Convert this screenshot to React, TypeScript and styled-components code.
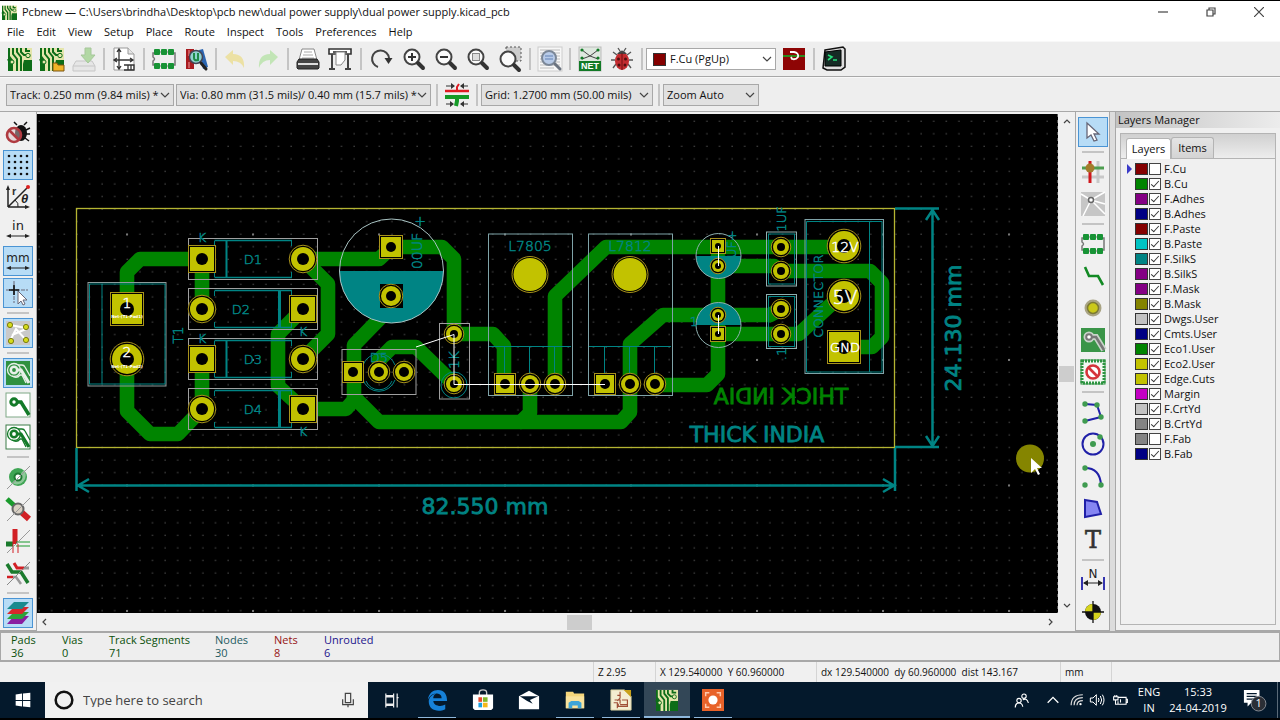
import React from "react";
import styled, { createGlobalStyle, css } from "styled-components";

const GlobalStyle = createGlobalStyle`
  *, *::before, *::after { box-sizing: border-box; }
  body { margin: 0; background: #000; }
  button, select, input { font: inherit; color: inherit; margin: 0; }
  a { color: inherit; text-decoration: none; }
`;

/* ---------- window frame ---------- */

const Screen = styled.div`
  display: flex;
  flex-direction: column;
  min-height: 100vh;
  padding: 1px 0 2px;
  background: #000;
  color: #111;
  font: 11px/14px "Open Sans", "Noto Sans", sans-serif;
`;
const TitleBar = styled.header`
  display: flex;
  align-items: center;
  height: 22px;
  padding-left: 2px;
  gap: 5px;
  background: #fff;
`;
const Title = styled.h1`
  flex: 1;
  margin: 0;
  font-size: 11px;
  font-weight: 400;
  white-space: nowrap;
`;
const WindowButton = styled.button`
  display: grid;
  place-items: center;
  width: 43px;
  height: 22px;
  padding: 0;
  border: 0;
  background: none;
`;
const MenuBar = styled.nav`
  display: flex;
  align-items: center;
  gap: 12px;
  height: 18px;
  padding-left: 7px;
  background: #fff;
`;
const MenuItem = styled.button`
  padding: 0;
  border: 0;
  background: none;
`;
const ToolRow = styled.div<{ $tall?: boolean }>`
  display: flex;
  align-items: center;
  height: ${(p) => (p.$tall ? 36 : 35)}px;
  padding-left: ${(p) => (p.$tall ? 4 : 6)}px;
  background: #eee;
  border-top: 1px solid #f8f8f8;
  border-bottom: 1px solid #a8a8a8;
`;
const ToolButton = styled.button<{ $on?: boolean; $faded?: boolean }>`
  display: grid;
  place-items: center;
  flex: none;
  width: 30px;
  height: 30px;
  margin: 1px;
  padding: 0;
  border: 1px solid ${(p) => (p.$on ? "#4a94d4" : "transparent")};
  background: ${(p) => (p.$on ? "#b7dcf6" : "transparent")};
  opacity: ${(p) => (p.$faded ? 0.45 : 1)};
`;
const Divider = styled.span<{ $across?: boolean; $size?: number }>`
  flex: none;
  ${(p) =>
    p.$across
      ? css`
          width: 22px;
          height: 2px;
          margin: 3px 0;
        `
      : css`
          width: 2px;
          height: 22px;
          margin: 0 ${((p.$size ?? 8) - 2) / 2}px;
        `}
  background: #c4c4c4;
`;
const SelectBox = styled.span<{ $width: number; $white?: boolean }>`
  display: grid;
  align-items: center;
  flex: none;
  width: ${(p) => p.$width}px;
  height: 22px;
  margin-right: 2px;
  border: 1px solid #a8a8a8;
  background: ${(p) => (p.$white ? "#fff" : "#e1e1e1")};
  & > * { grid-area: 1 / 1; }
  & > svg { justify-self: end; margin-right: 3px; pointer-events: none; }
`;
const NativeSelect = styled.select<{ $swatch?: boolean }>`
  width: 100%;
  height: 20px;
  padding: 0 0 0 ${(p) => (p.$swatch ? 23 : 3)}px;
  border: 0;
  background: transparent;
  appearance: none;
`;
const SelectSwatch = styled.i`
  width: 13px;
  height: 13px;
  margin-left: 6px;
  border: 1px solid #333;
  background: #840000;
  pointer-events: none;
`;

/* ---------- work area ---------- */

const Work = styled.main`
  display: flex;
  flex: 1;
  background: #dcdcdc;
`;
const SideBar = styled.div<{ $right?: boolean }>`
  display: flex;
  flex-direction: column;
  align-items: center;
  flex: none;
  width: ${(p) => (p.$right ? 35 : 37)}px;
  padding: ${(p) => (p.$right ? "4px 0 0" : "5px 1px 0 0")};
  background: #f0f0f0;
  border: 0 solid #a8a8a8;
  border-width: ${(p) => (p.$right ? "0 1px 1px" : "0 1px 1px 0")};
`;
const CanvasArea = styled.section`
  display: flex;
  flex: 1;
  min-width: 0;
  padding-top: 2px;
  background: #f0f0f0;
`;
const CanvasColumn = styled.div`
  display: flex;
  flex-direction: column;
  flex: 1;
  min-width: 0;
`;
const BoardSvg = styled.svg`
  display: block;
  flex: 1 1 0;
  width: 100%;
  min-height: 400px;
  background: #000;
  font-family: "DejaVu Sans", sans-serif;
`;
const Scroll = styled.div<{ $vertical?: boolean }>`
  display: flex;
  align-items: center;
  flex: none;
  flex-direction: ${(p) => (p.$vertical ? "column" : "row")};
  ${(p) => (p.$vertical ? "width: 17px; margin-bottom: 18px;" : "height: 18px;")}
  background: #f0f0f0;
`;
const ScrollArrow = styled.button`
  display: grid;
  place-items: center;
  width: 16px;
  height: 16px;
  padding: 0;
  border: 0;
  background: none;
`;
const ScrollGap = styled.span<{ $grow: number }>`
  flex: ${(p) => p.$grow} 1 0;
`;
const ScrollThumb = styled.span<{ $vertical?: boolean }>`
  width: ${(p) => (p.$vertical ? 15 : 25)}px;
  height: ${(p) => (p.$vertical ? 16 : 15)}px;
  background: #cdcdcd;
`;

/* ---------- layers manager ---------- */

const Manager = styled.aside`
  display: flex;
  flex-direction: column;
  flex: none;
  width: 165px;
  margin-left: 5px;
  padding: 0 4px 5px 0;
  background: #f0f0f0;
  border-left: 1px solid #a8a8a8;
  border-bottom: 1px solid #a8a8a8;
`;
const ManagerTitle = styled.h2`
  margin: 0 -4px 0 0;
  padding-left: 2px;
  background: linear-gradient(90deg, #c3c3c3, #ececec);
  font-size: 11px;
  font-weight: 400;
  line-height: 16px;
`;
const Notebook = styled.div`
  flex: 1;
  margin: 5px 0 0 4px;
  border: 1px solid #b4b4b4;
`;
const TabRow = styled.div`
  display: flex;
  align-items: flex-end;
  height: 25px;
  padding-left: 5px;
  background: linear-gradient(#d0d0d0, #ededed);
  border-bottom: 1px solid #b4b4b4;
`;
const Tab = styled.button<{ $on?: boolean }>`
  height: 21px;
  width: ${(p) => (p.$on ? 45 : 43)}px;
  margin-bottom: ${(p) => (p.$on ? -1 : 0)}px;
  padding: 0;
  border: 1px solid #b4b4b4;
  border-bottom: 0;
  border-radius: 3px 3px 0 0;
  background: ${(p) => (p.$on ? "#fff" : "linear-gradient(#e4e4e4, #d4d4d4)")};
`;
const LayerList = styled.ul`
  margin: 0;
  padding: 2px 0 0 6px;
  list-style: none;
`;
const LayerRow = styled.li`
  display: flex;
  align-items: center;
  height: 15px;
`;
const LayerMark = styled.span<{ $on?: boolean }>`
  width: 8px;
  height: 10px;
  border: 0 solid transparent;
  border-width: 5px 0 5px 5px;
  border-left-color: ${(p) => (p.$on ? "#3a3ac8" : "transparent")};
`;
const LayerSwatch = styled.span<{ $color: string }>`
  width: 13px;
  height: 12px;
  margin-right: 1px;
  border: 1px solid #333;
  background: ${(p) => p.$color};
`;
const LayerLabel = styled.label`
  display: flex;
  align-items: center;
  gap: 3px;
`;
const LayerCheck = styled.input`
  position: relative;
  width: 12px;
  height: 12px;
  border: 1px solid #444;
  background: #fff;
  appearance: none;
  &:checked::after {
    content: "";
    position: absolute;
    left: 3px;
    top: 0;
    width: 4px;
    height: 8px;
    border: solid #333;
    border-width: 0 1px 1px 0;
    transform: rotate(42deg);
  }
`;

/* ---------- bottom bars ---------- */

const MessagePanel = styled.section`
  display: flex;
  height: 31px;
  padding: 0 10px;
  background: #eee;
  border: 1px solid #a8a8a8;
  border-width: 2px 1px;
  line-height: 14px;
  dl { margin: 0; }
  dt, dd { margin: 0; white-space: nowrap; }
  dd { margin-top: -1px; }
`;
const Message = styled.dl<{ $color: string; $width: number }>`
  width: ${(p) => p.$width}px;
  color: ${(p) => p.$color};
`;
const StatusBar = styled.footer`
  display: grid;
  grid-template-columns: 594fr 62fr 161fr 244fr 51fr 168fr;
  height: 20px;
  background: #f0f0f0;
  font-size: 10px;
`;
const StatusCell = styled.span`
  padding-left: 4px;
  border-right: 1px solid #d4d4d4;
  line-height: 20px;
  white-space: pre;
`;
const TaskBar = styled.div`
  display: flex;
  height: 36px;
  background: #04192c;
  color: #fff;
`;
const StartButton = styled.button`
  display: grid;
  place-items: center;
  width: 45px;
  padding: 0;
  border: 0;
  background: none;
`;
const SearchBox = styled.label`
  display: flex;
  align-items: center;
  width: 323px;
  padding: 0 12px 0 9px;
  gap: 9px;
  background: #f1f1f1;
  color: #444;
`;
const SearchInput = styled.input`
  flex: 1;
  min-width: 0;
  padding: 0;
  border: 0;
  outline: 0;
  background: none;
  font-size: 13px;
  &::placeholder { color: #444; opacity: 1; }
`;
const TaskButton = styled.button<{ $state?: "open" | "active" }>`
  display: grid;
  place-items: center;
  width: 46px;
  padding: 0;
  border: 0;
  background: ${(p) => (p.$state === "active" ? "#334757" : "none")};
  box-shadow: ${(p) => (p.$state === "active" ? "inset 0 -2px #8fb8dc" : "none")};
  ${(p) =>
    p.$state === "open" &&
    css`
      background: linear-gradient(#8fb8dc, #8fb8dc) center bottom / 38px 1px no-repeat;
    `}
`;
const Tray = styled.div`
  display: flex;
  align-items: center;
  margin-left: auto;
  border-right: 1px solid #5a6a78;
  margin-right: 2px;
`;
const TrayButton = styled.button<{ $width: number }>`
  display: grid;
  place-items: center;
  width: ${(p) => p.$width}px;
  padding: 0;
  border: 0;
  background: none;
  line-height: 16px;
  white-space: pre-line;
`;

/* ---------- icons ---------- */

const IconSvg = styled.svg`
  overflow: visible;
`;
const Board = () => (
  <>
    <rect x="0" y="1" width="24" height="23" fill="#e4e5ac" />
    <path d="M0 1h2v8l3 4v11H0zM16 13h8v11h-9v-7z" fill="#0d6d18" />
    <path d="M5 1v6l4 5v12M9 1v4l4 5v14M13 1v4l3 3h5M0 12l2 4M18 1v3l4 0M1 24v-8" fill="none" stroke="#0d6d18" strokeWidth="2" />
    <circle cx="4" cy="15" r="2" fill="#e4e5ac" stroke="#0d6d18" />
    <circle cx="20" cy="8.5" r="2.2" fill="#e4e5ac" stroke="#0d6d18" />
  </>
);
const Glass = ({ children }: { children?: React.ReactNode }) => (
  <>
    <circle cx="10" cy="10" r="7.5" fill="#fafafa" stroke="#444" strokeWidth="2" />
    <path d="M16 16l5 5" stroke="#333" strokeWidth="4" strokeLinecap="round" />
    {children}
  </>
);
const Foot = () => (
  <>
    <path d="M4 6H1v4q3 2 0 4v4h3M20 6h3v12h-3" fill="none" stroke="#777" strokeWidth="1.5" />
    <path d="M3 5h18M3 19h18" stroke="#777" />
    {[2, 9, 16].map((x) => (
      <g key={x} fill="#179335">
        <rect x={x} y="2" width="6" height="6" rx="1" />
        <rect x={x} y="16" width="6" height="6" rx="1" />
      </g>
    ))}
  </>
);
const ZoneTrack = ({ line, bg, outline }: { line: string; bg: string; outline?: boolean }) => (
  <>
    <rect x="0" y="0" width="24" height="24" fill={bg} stroke={outline ? "#3d7c48" : "none"} />
    <circle cx="8" cy="9" r="6.500" fill="none" stroke={line} strokeWidth="1.300" />
    <path d="M12 4h4q2 0 3 2l5 9M6 15q5 3 8-1l2 0 4 8" fill="none" stroke={line} strokeWidth="1.300" />
    <path d="M10 9h5l8 13" fill="none" stroke={line} strokeWidth="3.200" />
    <circle cx="8" cy="9" r="3.200" fill={bg} stroke={line} strokeWidth="2.600" />
  </>
);
const icons: Record<string, React.ReactNode> = {
  board: <Board />,
  openBoard: (
    <>
      <Board />
      <path d="M13 16h4l1 2h6v6H13z" fill="#f0b428" stroke="#7a5510" />
    </>
  ),
  save: (
    <>
      <path d="M4 14h16l3 5v5H1v-5z" fill="#ddd" stroke="#999" />
      <path d="M1 19h22" stroke="#999" />
      <path d="M13 1h6v7h4l-7 8-7-8h4z" fill="#6abf4b" stroke="#509838" />
    </>
  ),
  sheet: (
    <>
      <path d="M2 1h14l6 6v16H2z" fill="#fff" stroke="#999" />
      <path d="M16 1v6h6" fill="#e5e5e5" stroke="#999" />
      <path d="M7 3v18M3 13h17M5 5l2-3 2 3M5 19l2 3 2-3M18 11l3 2-3 2M5 11l-3 2 3 2M12 18h10v5H12M16 18v5M19 18v5" fill="none" stroke="#333" strokeWidth="1.3" />
    </>
  ),
  footprint: <Foot />,
  library: (
    <>
      <path d="M2 2h8v20H2z" fill="#a81c20" />
      <path d="M5 3v6M5 15v6" stroke="#ef999b" strokeWidth="1" />
      <path d="M15 3l4-1 5 18-5 2z" fill="#2b65b0" />
      <circle cx="12" cy="10" r="6.5" fill="#8fd2cf" stroke="#445" strokeWidth="1.5" />
      <path d="M10 6v5q0 3 4 2V6" fill="none" stroke="#1d8a48" strokeWidth="2" />
      <path d="M17 16l5 6" stroke="#222" strokeWidth="3" strokeLinecap="round" />
    </>
  ),
  undo: <path d="M9 3v4q12 0 11 14-3-7-11-7v4L1 10z" fill="#ead24c" />,
  redo: <path d="M14 3v4Q2 7 3 21q3-8 11-8v5l8-8z" fill="#8fdc73" />,
  print: (
    <>
      <path d="M6 2h12l3 11H3z" fill="#fff" stroke="#888" />
      <path d="M8 5h8M7 8h10M6 11h12" stroke="#aaa" />
      <path d="M3 12h18l2 3v6l-1 1H2l-1-1v-6z" fill="#444" stroke="#222" />
      <path d="M2 17h20" stroke="#ddd" strokeWidth="2" />
    </>
  ),
  plot: (
    <>
      <path d="M1 2h22v5H1z" fill="#fff" stroke="#333" strokeWidth="1.6" />
      <path d="M5 5h14" stroke="#333" strokeWidth="1.6" />
      <path d="M4 7v14M20 7v14M1 22h6M17 22h6" stroke="#444" strokeWidth="2" />
      <path d="M8 5h9v8l-4 5H8z" fill="#fff" stroke="#888" />
    </>
  ),
  refresh: (
    <>
      <path d="M8 20a8.500 8.500 0 1 1 11-9" fill="none" stroke="#444" strokeWidth="2" />
      <path d="M14.500 11h8l-4 6z" fill="#333" />
    </>
  ),
  zoomIn: <Glass><path d="M6 10h8M10 6v8" stroke="#333" strokeWidth="2" /></Glass>,
  zoomOut: <Glass><path d="M6 10h8" stroke="#333" strokeWidth="2" /></Glass>,
  zoomFit: <Glass><rect x="6.500" y="6.500" width="7" height="7" fill="#ddd" stroke="#888" /></Glass>,
  zoomArea: (
    <>
      <rect x="8" y="0" width="15" height="14" fill="#ccc" stroke="#555" strokeDasharray="2 2" />
      <g transform="translate(0 2)"><Glass /></g>
    </>
  ),
  find: (
    <>
      <rect x="0" y="0" width="24" height="24" fill="#f7f7f7" stroke="#ccc" />
      <path d="M2 3h20M2 6h20M2 9h20M2 12h20M2 15h20M2 18h20M2 21h14" stroke="#bbb" />
      <circle cx="11" cy="11" r="7" fill="#b8cbe8" stroke="#7b8797" strokeWidth="2" />
      <path d="M7 9h8M7 12h8" stroke="#6282b5" />
      <path d="M17 17l5 5" stroke="#6c7480" strokeWidth="3" strokeLinecap="round" />
    </>
  ),
  net: (
    <>
      <rect x="1" y="0" width="22" height="24" fill="#dfe8df" stroke="#bbb" />
      <path d="M4 3l8 6 8-6M4 12l8-3 8 3" fill="none" stroke="#444" />
      <g fill="#127a26"><circle cx="4" cy="3" r="1.600" /><circle cx="20" cy="3" r="1.600" /><circle cx="4" cy="11" r="1.600" /><circle cx="20" cy="11" r="1.600" /></g>
      <rect x="1" y="14" width="22" height="10" fill="#127a26" />
      <text x="12" y="22" textAnchor="middle" fontSize="9" fontWeight="700" fill="#fff" fontFamily="Liberation Sans">NET</text>
    </>
  ),
  bug: (
    <>
      <path d="M7 8L3 5M17 8l4-3M5 13H1M19 13h4M6 17l-3 4M18 17l3 4M10 4L8 1M14 4l2-3" stroke="#555" strokeWidth="1.300" />
      <ellipse cx="12" cy="14" rx="7" ry="9" fill="#c32b2f" />
      <path d="M7 7q5-7 10 0z" fill="#444" />
      <path d="M12 6v17" stroke="#701010" />
      <g fill="#501010"><circle cx="8.500" cy="12" r="1.500" /><circle cx="15.500" cy="12" r="1.500" /><circle cx="9" cy="18" r="1.500" /><circle cx="15" cy="18" r="1.500" /></g>
    </>
  ),
  layerPair: (
    <>
      <rect x="1" y="1" width="22" height="22" fill="#8e0505" />
      <path d="M1 9h22" stroke="#2a8a1c" strokeWidth="2" />
      <path d="M8 5h4q5 1 4 5-2 3-6 2l-1-2" fill="none" stroke="#fff" strokeWidth="1.800" />
    </>
  ),
  console: (
    <>
      <path d="M3 3L21 0l2 2v18l-4 3H5l-4-2z" fill="#ddd" stroke="#111" strokeWidth="1.500" />
      <path d="M3 5l16-2v16H3z" fill="#152b25" stroke="#000" />
      <path d="M6 8l4 2-4 3M11 13h4" fill="none" stroke="#25e07a" strokeWidth="1.600" />
    </>
  ),
  trackWidth: (
    <>
      <path d="M0 8h24" stroke="#e01c24" strokeWidth="2.500" />
      <path d="M12 8V4l2-3" fill="none" stroke="#e01c24" strokeWidth="2" />
      <path d="M0 14h24M12 14v4l-1 5" fill="none" stroke="#159a28" strokeWidth="4" />
      <path d="M1 3h8M23 3h-7M1 21h7M23 21h-7" stroke="#333" />
      <path d="M6 0l4 3-4 3zM19 0l-4 3 4 3zM5 18l4 3-4 3zM19 18l-4 3 4 3z" fill="#333" />
    </>
  ),
  drcOff: (
    <>
      <ellipse cx="15" cy="12" rx="6" ry="8" fill="#111" />
      <path d="M11 4L8 1M18 4l3-3M20 9l4-2M20 13h4M19 17l4 3" stroke="#111" strokeWidth="1.500" />
      <circle cx="8" cy="14" r="7" fill="#d9c2c2" fillOpacity=".5" stroke="#b03a40" strokeWidth="2.600" />
      <path d="M3 9l10 10" stroke="#b03a40" strokeWidth="2.600" />
    </>
  ),
  grid: (
    <g fill="#111">
      {[3, 9, 15, 21].map((x) => [3, 9, 15, 21].map((y) => <circle key={`${x}${y}`} cx={x} cy={y} r="1.300" />))}
    </g>
  ),
  polar: (
    <>
      <path d="M2 22V3M2 22h19M2 22L21 3" fill="none" stroke="#222" strokeWidth="1.500" />
      <path d="M0 5l2-5 2 5zM19 20l5 2-5 2z" fill="#222" />
      <path d="M9 15q4 3 3 7" fill="none" stroke="#222" />
      <circle cx="22" cy="2" r="2" fill="#d22" />
      <text x="6" y="10" fontSize="11" fontWeight="700" fill="#333" fontFamily="Liberation Sans">r</text>
      <text x="15" y="18" fontSize="13" fontWeight="700" fontStyle="italic" fill="#222" fontFamily="Liberation Sans">θ</text>
    </>
  ),
  inch: (
    <>
      <text x="12" y="13" textAnchor="middle" fontSize="13" fill="#222" fontFamily="DejaVu Sans">in</text>
      <path d="M3 19h18" stroke="#222" />
      <path d="M5 17l-5 2 5 2zM19 17l5 2-5 2z" fill="#222" />
    </>
  ),
  mm: (
    <>
      <text x="12" y="13" textAnchor="middle" fontSize="12" fill="#222" fontFamily="DejaVu Sans">mm</text>
      <path d="M3 19h18" stroke="#222" />
      <path d="M5 17l-5 2 5 2zM19 17l5 2-5 2z" fill="#222" />
    </>
  ),
  cursor: (
    <>
      <path d="M8 0v22M0 9h22" stroke="#667" strokeDasharray="4 1" />
      <path d="M8 4v10M3 9h10" stroke="#111" strokeWidth="1.600" />
      <path d="M12 10v13l3-3 2 4 2-1-2-4h4z" fill="#fff" stroke="#667" />
    </>
  ),
  ratsnest: (
    <>
      <rect x="0" y="0" width="24" height="24" fill="#c9c9c9" />
      <path d="M4 4l16 3M4 20l6-12 10 11M6 14l14-6" stroke="#fff" strokeWidth="2" fill="none" />
      <g fill="#d6dc1c" stroke="#7a7d10"><circle cx="4" cy="4" r="2.600" /><circle cx="20" cy="6" r="2.600" /><circle cx="5" cy="20" r="2.600" /><circle cx="20" cy="19" r="2.600" /></g>
    </>
  ),
  zoneFill: <ZoneTrack line="#e8f0e8" bg="#2f9140" />,
  zoneHide: (
    <>
      <rect x="0" y="0" width="24" height="24" fill="#fff" stroke="#7fa886" />
      <path d="M10 9h5l8 13" fill="none" stroke="#137a28" strokeWidth="3.500" />
      <circle cx="8" cy="9" r="3.200" fill="#fff" stroke="#137a28" strokeWidth="3" />
    </>
  ),
  zoneOutline: <ZoneTrack line="#137a28" bg="#fff" outline />,
  padSketch: (
    <>
      <circle cx="12" cy="12" r="9" fill="#3fa554" />
      <path d="M18 5a9 9 0 0 1-12 13z" fill="#8dc898" />
      <circle cx="12" cy="12" r="3.500" fill="#fff" stroke="#1f7a33" strokeWidth="2" />
      <path d="M1 24L24 1" stroke="#999" />
    </>
  ),
  viaSketch: (
    <>
      <path d="M1 2l10 9" stroke="#1a9a2c" strokeWidth="5" />
      <path d="M13 13l10 9" stroke="#d11f24" strokeWidth="6" />
      <circle cx="12" cy="12" r="5.500" fill="#d8cfc2" stroke="#666" strokeWidth="2" />
      <path d="M1 24L24 1" stroke="#999" />
    </>
  ),
  trackSketch: (
    <>
      <path d="M0 15h7" stroke="#1a7a2c" strokeWidth="5" />
      <path d="M9 0v15" stroke="#d11f24" strokeWidth="5" />
      <path d="M10 13h14M10 17h14" stroke="#1a9a2c" />
      <path d="M7 15v9M12 15v9" stroke="#d11f24" />
      <path d="M1 24L24 1" stroke="#999" />
    </>
  ),
  contrast: (
    <>
      <path d="M8 2l3 5h7" fill="none" stroke="#d11f24" strokeWidth="3" />
      <path d="M18 7h5" stroke="#999" strokeWidth="3" />
      <path d="M1 3l5 8h9l7 11" fill="none" stroke="#1a7a2c" strokeWidth="3.500" />
      <path d="M7 16l3 0 5 7" fill="none" stroke="#999" strokeWidth="2.500" />
      <path d="M1 16h6" stroke="#d11f24" strokeWidth="2.500" />
      <path d="M1 24L24 1" stroke="#888" />
    </>
  ),
  layers: (
    <>
      <path d="M8 15h15l-7 8H1z" fill="#8a1fa0" />
      <path d="M8 11h15l-7 7H1z" fill="#2da33a" />
      <path d="M8 6h15l-7 7H1z" fill="#d8282c" />
      <path d="M8 1h15l-7 7H1z" fill="#1a8b8f" />
    </>
  ),
  arrow: <path d="M6 3v15l4-3 3 6 3-1-3-6h5z" fill="#fff" stroke="#667" strokeWidth="1.300" />,
  highlight: (
    <>
      <path d="M17 1v22M1 17h22" stroke="#c8c8c8" strokeWidth="3" />
      <path d="M9 1v22" stroke="#d0161c" strokeWidth="3" />
      <path d="M1 8h22" stroke="#4e9e50" strokeWidth="3" />
      <circle cx="9" cy="8" r="4.500" fill="#a37c2c" />
    </>
  ),
  localRats: (
    <>
      <rect x="0" y="0" width="24" height="24" fill="#c6c6c6" />
      <path d="M10 8L0 2M10 8L24 0M10 8L2 24M10 8l14 14M10 8l14 4" stroke="#fff" strokeWidth="1.500" />
      <circle cx="10" cy="8" r="2.500" fill="#fff" stroke="#666" strokeWidth="1.500" />
    </>
  ),
  route: <path d="M4 3l4 9h9l5 9" fill="none" stroke="#138a24" strokeWidth="2.600" />,
  via: (
    <>
      <circle cx="12" cy="12" r="8.500" fill="#a9a484" />
      <circle cx="12" cy="12" r="5.500" fill="#cbc91a" stroke="#7d7b33" strokeWidth="1.500" />
    </>
  ),
  zone: (
    <>
      <rect x="0" y="0" width="24" height="24" fill="#3a9548" />
      <path d="M9 9h6l8 13" fill="none" stroke="#c9d4ca" strokeWidth="6" />
      <circle cx="8" cy="9" r="5.500" fill="#c9d4ca" />
      <path d="M9 9h6l8 13" fill="none" stroke="#777" strokeWidth="2.600" />
      <circle cx="8" cy="9" r="2.800" fill="#fff" stroke="#777" strokeWidth="2" />
    </>
  ),
  keepout: (
    <>
      <rect x="1" y="1" width="22" height="22" fill="#f3f9f3" stroke="#2c9440" strokeWidth="3" strokeDasharray="2 1" />
      <rect x="0" y="0" width="24" height="24" fill="none" stroke="#2c9440" />
      <circle cx="12" cy="12" r="6.500" fill="#fff" stroke="#d5343a" strokeWidth="2.600" />
      <path d="M8 8l8 8" stroke="#d5343a" strokeWidth="2.600" />
    </>
  ),
  line: (
    <>
      <path d="M4 4l12 1 4 12-16 4" fill="none" stroke="#2020a8" strokeWidth="2" />
      <g fill="#3f9b50"><circle cx="4" cy="4" r="2.700" /><circle cx="16" cy="5" r="2.700" /><circle cx="20" cy="17" r="2.700" /><circle cx="4" cy="21" r="2.700" /></g>
    </>
  ),
  circle: (
    <>
      <circle cx="12" cy="12" r="10.500" fill="none" stroke="#2020a8" strokeWidth="2" />
      <g fill="#3f9b50"><circle cx="12" cy="12" r="3" /><circle cx="19" cy="5" r="2.700" /></g>
    </>
  ),
  arc: (
    <>
      <path d="M4 4q15 0 16 17" fill="none" stroke="#2020a8" strokeWidth="2" />
      <g fill="#3f9b50"><circle cx="4" cy="4" r="2.700" /><circle cx="20" cy="21" r="2.700" /><circle cx="4" cy="21" r="2.700" /></g>
    </>
  ),
  polygon: <path d="M4 4l12 2 4 12-16 3z" fill="#8585f2" stroke="#2020a8" strokeWidth="2" />,
  text: <text x="12" y="20" textAnchor="middle" fontSize="24" fill="#333" stroke="#333" strokeWidth="0.600" fontFamily="DejaVu Serif">T</text>,
  dimension: (
    <>
      <path d="M1 9v13M23 9v13" stroke="#2020a8" strokeWidth="1.800" />
      <path d="M3 15h18" stroke="#222" />
      <path d="M7 12l-5 3 5 3zM17 12l5 3-5 3z" fill="#222" />
      <text x="12" y="10" textAnchor="middle" fontSize="12" fill="#222" fontFamily="DejaVu Sans">N</text>
    </>
  ),
  origin: (
    <>
      <circle cx="12" cy="12" r="8" fill="#111" />
      <path d="M12 12V4a8 8 0 0 0-8 8zM12 12v8a8 8 0 0 0 8-8z" fill="#d5d31c" />
      <path d="M12 1v22M1 12h22" stroke="#111" strokeWidth="1.300" />
    </>
  ),
  windows: <path d="M4 6l7-1v7H4zM12 5l8-1v8h-8zM4 13h7v6l-7-1zM12 13h8v7l-8-1z" fill="#fff" />,
  cortana: <circle cx="12" cy="12" r="10" fill="none" stroke="#111" strokeWidth="3" />,
  mic: <path d="M8 2h8v14H8zM4 11v8h16v-8M12 19v4" fill="none" stroke="#444" strokeWidth="1.800" />,
  taskView: <path d="M4 7h11v10H4zM4 2v3h11V2M4 22v-3h11v3M20 2v20M19 8h3" fill="none" stroke="#eee" strokeWidth="1.700" />,
  edge: <path d="M2 12C3 4 8 1 13 1c7 0 10 5 10 12H8c0 5 8 7 13 4v5C13 26 3 23 3 14c0-5 4-8 8-9-3 2-3 4-3 5h9c0-4-3-5-6-5-4 0-7 3-9 7z" fill="#1681d8" />,
  store: (
    <>
      <path d="M8 7V4q0-3 4-3t4 3v3" fill="none" stroke="#ccc" strokeWidth="1.500" />
      <path d="M1 6h22v15l-2 2H3l-2-2z" fill="#fff" />
      <path d="M7 9h4v5H7z" fill="#e8482c" /><path d="M12 9h5v5h-5z" fill="#7fb82d" /><path d="M7 15h4v5H7z" fill="#1d9fe0" /><path d="M12 15h5v5h-5z" fill="#f5b81c" />
    </>
  ),
  mail: (
    <>
      <path d="M1 8l11-6 11 6v14H1z" fill="#fff" />
      <path d="M2 8h20l-9 4 3 4-6-3z" fill="#04192c" />
    </>
  ),
  folder: (
    <>
      <path d="M2 3h8l1 2h11v16H2z" fill="#f5d67b" />
      <path d="M2 8h20v13H2z" fill="#fae39c" />
      <path d="M5 21v-6l3-2h8l3 2v6h-4v-3H9v3z" fill="#3ea5d8" />
    </>
  ),
  schematic: (
    <>
      <path d="M1 1h15l7 7v15H1z" fill="#f4eed2" stroke="#d8cfa0" />
      <path d="M15 1h8v8z" fill="#c9a21a" />
      <path d="M11 3v7M8 7h3M5 12h6v4M4 15h4v6M11 17h8M13 12h6v7H9v-3M11 10l-3 3" fill="none" stroke="#a05038" strokeWidth="1.300" />
    </>
  ),
  recorder: (
    <>
      <rect x="0" y="0" width="24" height="24" fill="#e86229" />
      <circle cx="12" cy="12" r="5" fill="#fff" />
      <path d="M4 8V4h4M16 4h4v4M20 16v4h-4M8 20H4v-4" fill="none" stroke="#ffc9ae" strokeWidth="1.600" />
    </>
  ),
  people: (
    <g fill="none" stroke="#fff" strokeWidth="1.800">
      <circle cx="8" cy="12" r="3.500" /><path d="M2 23q0-7 6-7 5 0 6 6" /><circle cx="16" cy="5" r="3.500" /><path d="M14 11q7-4 9 5" />
    </g>
  ),
  up: <path d="M4 16l8-8 8 8" fill="none" stroke="#fff" strokeWidth="2" />,
  wifi: (
    <g fill="none" stroke="#ddd" strokeWidth="2">
      <path d="M2 21Q2 3 22 3M7 21Q7 8 22 8M12 21q0-8 10-8" /><circle cx="18" cy="19" r="2" fill="#fff" stroke="none" />
    </g>
  ),
  sound: <path d="M2 9h4l5-5v16l-5-5H2zM14 9q2 3 0 6M17 6q4 6 0 12M20 4q5 8 0 16" fill="none" stroke="#fff" strokeWidth="1.500" />,
  battery: <path d="M8 7h13v11H8v-5M21 10h2v5h-2M1 6h7v5H1zM3 3v3M6 3v3M4 11v7h4M12 10v5" fill="none" stroke="#fff" strokeWidth="1.700" />,
  notice: (
    <>
      <path d="M1 1h17v14H9l-4 4v-4H1z" fill="#fff" />
      <path d="M4 5h11M4 8h11M4 11h8" stroke="#04192c" strokeWidth="1.500" />
      <circle cx="17" cy="16" r="8" fill="#2b2f36" stroke="#8d9299" />
      <text x="17" y="20" textAnchor="middle" fontSize="12" fill="#fff" fontFamily="Open Sans">1</text>
    </>
  ),
};
const Icon = ({ name, size = 24 }: { name: string; size?: number }) => (
  <IconSvg width={size} height={size} viewBox="0 0 24 24" aria-hidden="true">{icons[name]}</IconSvg>
);
const Chevron = ({ d = "M1 3l4 4 4-4" }: { d?: string }) => (
  <svg width="10" height="10" viewBox="0 0 10 10" aria-hidden="true">
    <path d={d} fill="none" stroke="#444" strokeWidth="1.200" />
  </svg>
);

/* ---------- circuit board ---------- */

const GREEN = "#008400";
const TEAL = "#008484";
const PAD = "#c2c200";
const HALO = "#a8921c";

const tracks = [
  "M127 309V272L140 259H202", "M127 359V411L150 434H178L202 409", "M202 259V309", "M202 359V409",
  "M303 259H379L391 248", "M303 259L328 284V334L303 359", "M303 309L278 334V386L303 409H346L354 400",
  "M391 296V307L354 345V397L379 422H621L630 412V344L663 315H770L781 309", "M391 247H442L454 259V334H493L504 346V384",
  "M379 372V360L392 347H416L454 384", "M555 384V296L606 247H844", "M530 384V413L521 422",
  "M718 266H774L781 271H870L882 283V337L872 347H844", "M718 256V374L707 385H655", "M718 334H799L838 298",
];

type PadProps = { x: number; y: number; r?: number; hole?: number; square?: boolean };
const Pad = ({ x, y, r = 10, hole = 5, square }: PadProps) => (
  <g>
    {square ? (
      <>
        <rect x={x - r - 1.5} y={y - r - 1.5} width={2 * r + 3} height={2 * r + 3} fill="#000" stroke={HALO} />
        <rect x={x - r} y={y - r} width={2 * r} height={2 * r} fill={PAD} />
      </>
    ) : (
      <>
        <circle cx={x} cy={y} r={r + 1.8} fill="#000" stroke={HALO} />
        <circle cx={x} cy={y} r={r} fill={PAD} />
      </>
    )}
    <circle cx={x} cy={y} r={hole} fill="#000" />
  </g>
);
type LabelProps = { x: number; y: number; size?: number; up?: boolean; fill?: string; children: string };
const Label = ({ x, y, size = 14, up, fill = TEAL, children }: LabelProps) => (
  <text
    x={x}
    y={y}
    fontSize={size}
    fontWeight="200"
    fill={fill}
    stroke={fill}
    strokeWidth="0.500"
    textAnchor="middle"
    dominantBaseline="central"
    transform={up ? `rotate(-90 ${x} ${y})` : undefined}
  >
    {children}
  </text>
);
const Diode = ({ y, name, flip }: { y: number; name: string; flip?: boolean }) => (
  <g>
    <rect x="188.500" y={y - 20.5} width="129" height="41" fill="none" stroke="#a0a0a0" />
    <path d={`M214.500 ${y - 18.5}H292M214.500 ${y + 18.5}H292`} stroke={TEAL} strokeWidth="1.500" />
    <path d={`M214.500 ${y - 18}V${y - 13}M214.500 ${y + 13}V${y + 18}M291.500 ${y - 18}V${y - 13}M291.500 ${y + 13}V${y + 18}`} stroke={TEAL} />
    <path d={`M${flip ? 279.5 : 226.5} ${y - 18}V${y + 18}`} stroke={TEAL} strokeWidth={flip ? 3 : 2} />
    <Label x={name === "D2" ? 241 : 253} y={y} size={13}>{name}</Label>
  </g>
);
const Regulator = ({ x, name }: { x: number; name: string }) => (
  <g>
    <path d={`M${x - 41} 346.500h82M${x - 25.5} 346V374M${x - 0.5} 346V374M${x + 24.5} 346V374`} stroke={TEAL} />
    <rect x={x - 41.5} y="234" width="84" height="161.500" fill="none" stroke="#7fa3a8" />
    <circle cx={x} cy="274.500" r="18" fill="#000" stroke={HALO} />
    <circle cx={x} cy="274.500" r="16.500" fill={PAD} />
    <Label x={x} y={246}>{name}</Label>
    <Pad x={x - 25} y={384} r={9} square />
    <Pad x={x} y={384} r={9} />
    <Pad x={x + 25} y={384} r={9} />
  </g>
);

const BoardCanvas = () => (
  <BoardSvg viewBox="37 114 1021 499" preserveAspectRatio="xMidYMid slice" role="img" aria-label="Board layout">
    <defs>
      <pattern id="dots" x="38" y="120" width="12.600" height="12.550" patternUnits="userSpaceOnUse">
        <rect x="0.600" y="0.700" width="1" height="1" fill="#7a7a7a" />
      </pattern>
      <pattern id="marks" x="126" y="108" width="126" height="125.500" patternUnits="userSpaceOnUse">
        <rect x="0" y="0" width="2" height="2" fill="#777" />
      </pattern>
    </defs>
    <rect x="37" y="114" width="1021" height="499" fill="url(#dots)" />
    <rect x="37" y="114" width="1021" height="499" fill="url(#marks)" />

    <g fill="none" stroke={GREEN} strokeWidth="14.600" strokeLinejoin="round" strokeLinecap="round">
      {tracks.map((d) => <path key={d} d={d} />)}
    </g>

    <rect x="76.500" y="208.500" width="818" height="239" fill="none" stroke="#b4b432" strokeWidth="1.300" />

    <rect x="88" y="282.500" width="78" height="103.500" fill="none" stroke="#8d9c9c" />
    <path d="M89.500 284h75.500v100h-75.500zM102 284v100" fill="none" stroke={TEAL} />
    <Pad x={127} y={309} r={15} hole={7} square />
    <Pad x={127} y={359} r={15} hole={7} />
    <g fill="#fff" stroke="none">
      <Label x={127} y={303} fill="#fff">1</Label>
      <Label x={127} y={352} fill="#fff">2</Label>
      <text x="127" y="318" fontSize="4" fontWeight="700" textAnchor="middle">Net-(T1-Pad1)</text>
      <text x="127" y="368" fontSize="4" fontWeight="700" textAnchor="middle">Net-(T1-Pad2)</text>
    </g>
    <Label x={178} y={335} up>T1</Label>

    <Diode y={259} name="D1" />
    <Diode y={309} name="D2" flip />
    <Diode y={359} name="D3" />
    <Diode y={409} name="D4" flip />
    <Pad x={202} y={259} r={12} hole={6} square />
    <Pad x={303} y={259} r={12} hole={6} />
    <Pad x={202} y={309} r={12} hole={6} />
    <Pad x={303} y={309} r={12} hole={6} square />
    <Pad x={202} y={359} r={12} hole={6} square />
    <Pad x={303} y={359} r={12} hole={6} />
    <Pad x={202} y={409} r={12} hole={6} />
    <Pad x={303} y={409} r={12} hole={6} square />
    <Label x={202} y={237} size={13}>K</Label>
    <Label x={202} y={338} size={13}>K</Label>
    <Label x={303} y={331} size={13}>K</Label>
    <Label x={303} y={431} size={13}>K</Label>

    <path d="M339.500 271a52 52 0 0 0 104 0z" fill={TEAL} />
    <circle cx="391.500" cy="271" r="52" fill="none" stroke="#a9c4c4" />
    <rect x="380" y="284" width="23" height="24" fill="#000" />
    <Pad x={391} y={247} hole={5} square />
    <Pad x={391} y={296} hole={5} />
    <Label x={417} y={251} up>00UF</Label>
    <Label x={420} y={221}>+</Label>

    <rect x="342" y="349.500" width="74" height="45" fill="none" stroke="#a0a0a0" />
    <path d="M363 365a17 17 0 0 1 32 0M363 380a17 17 0 0 0 32 0M366 381a14 14 0 0 0 26 0" fill="none" stroke={TEAL} />
    <Label x={379} y={357} size={13}>D5</Label>
    <Pad x={353} y={372} r={9} square />
    <Pad x={379} y={372} r={9} />
    <Pad x={404} y={372} r={9} />

    <rect x="439.500" y="323.500" width="30" height="75.500" fill="none" stroke="#a0a0a0" />
    <circle cx="454" cy="385" r="13" fill="none" stroke={TEAL} />
    <Label x={454} y={360} up>1K</Label>
    <Pad x={454} y={334} r={8} hole={4} />
    <Pad x={454} y={384} r={8} hole={4} />

    <Regulator x={530} name="L7805" />
    <Regulator x={630} name="L7812" />
    <path d="M416 347L454 334.500V384.500H605" fill="none" stroke="#fff" />

    <path d="M696 256a22.500 22.500 0 0 0 45 0zM696 325a22.500 22.500 0 0 1 45 0z" fill={TEAL} />
    <circle cx="718.500" cy="256" r="22.500" fill="none" stroke="#8fb0b0" />
    <circle cx="718.500" cy="325" r="22.500" fill="none" stroke="#8fb0b0" />
    <Label x={731} y={244} size={13} up>UF+</Label>
    <Label x={694} y={321} size={13}>1</Label>
    <Pad x={718} y={246} r={6} hole={3} square />
    <Pad x={718} y={266} r={6} hole={3} />
    <Pad x={718} y={315} r={6} hole={3} />
    <Pad x={718} y={334} r={6} hole={3} square />
    <path d="M718.500 246v20M718.500 315v19" stroke="#fff" />

    {[232, 294.5].map((y) => (
      <g key={y} fill="none">
        <rect x="766.500" y={y} width="30" height="54" stroke="#8fb0b0" />
        <rect x="768.500" y={y + 2} width="26" height="50" stroke={TEAL} />
      </g>
    ))}
    <Pad x={781} y={247} r={8} hole={4} />
    <Pad x={781} y={271} r={8} hole={4} />
    <Pad x={781} y={309} r={8} hole={4} />
    <Pad x={781} y={334} r={8} hole={4} />
    <Label x={781} y={219} size={13} up>1UF</Label>
    <Label x={781} y={354} size={13} up>.1</Label>

    <rect x="805" y="219.500" width="78.500" height="154" fill="none" stroke="#7fa3a8" />
    <path d="M806.500 221.500H882v150.500h-75.500zM869.500 221v151" fill="none" stroke={TEAL} />
    <Pad x={844} y={246} r={15} hole={7} />
    <Pad x={844} y={296} r={15} hole={7} />
    <Pad x={844} y={347} r={15} hole={7} square />
    <Label x={818} y={296} size={13} up>CONNECTOR</Label>
    <Label x={845} y={247} size={14} fill="#fff">12V</Label>
    <Label x={845} y={297} size={19} fill="#fff">5V</Label>
    <Label x={845} y={347} size={13} fill="#fff">GND</Label>

    <g fontSize="22" textAnchor="middle" fill={TEAL} stroke={TEAL} strokeWidth="0.800">
      <text x="-781" y="404" transform="scale(-1 1)" fill={GREEN} stroke={GREEN}>THICK INDIA</text>
      <text x="757" y="442">THICK INDIA</text>
      <text x="485" y="514">82.550 mm</text>
      <text x="961" y="328" transform="rotate(-90 961 328)">24.130 mm</text>
    </g>
    <g fill="none" stroke={TEAL} strokeWidth="2.500">
      <path d="M895 208.500H939M895 447H939M932.500 210V446M926 220L932.500 210L939 220M926 436L932.500 446L939 436" />
      <path d="M76.500 448V491M895 448V491M78 485.500H894M89 479L78 485.500L89 492M883 479L894 485.500L883 492" />
    </g>

    <circle cx="1030" cy="458.500" r="14" fill="#858500" />
    <path d="M1031 458v15l4-4 3 6 2-1-3-6h5z" fill="#fff" />
    <path d="M1057.500 114V613" stroke="#555" strokeDasharray="3 3" />
  </BoardSvg>
);

/* ---------- data ---------- */

type Tool = { name: string; label: string; on?: boolean; faded?: boolean };
const t = (name: string, label: string, extra: Partial<Tool> = {}): Tool => ({ name, label, ...extra });

const mainTools: Tool[][] = [
  [t("board", "New board"), t("openBoard", "Open board"), t("save", "Save", { faded: true })],
  [t("sheet", "Page settings")],
  [t("footprint", "Footprint editor"), t("library", "Footprint viewer")],
  [t("undo", "Undo", { faded: true }), t("redo", "Redo", { faded: true })],
  [t("print", "Print"), t("plot", "Plot")],
  [t("refresh", "Refresh"), t("zoomIn", "Zoom in"), t("zoomOut", "Zoom out"), t("zoomFit", "Zoom to fit"), t("zoomArea", "Zoom to selection")],
  [t("find", "Find")],
  [t("net", "Load netlist"), t("bug", "Design rules check")],
];
const leftTools: Tool[][] = [
  [t("drcOff", "Design rule checking"), t("grid", "Grid", { on: true }), t("polar", "Polar coordinates"), t("inch", "Inches"), t("mm", "Millimetres", { on: true }), t("cursor", "Cursor shape", { on: true })],
  [t("ratsnest", "Ratsnest", { on: true })],
  [t("zoneFill", "Filled zones", { on: true }), t("zoneHide", "Hide zones"), t("zoneOutline", "Zone outlines")],
  [t("padSketch", "Sketch pads"), t("viaSketch", "Sketch vias"), t("trackSketch", "Sketch tracks"), t("contrast", "High contrast")],
  [t("layers", "Layers manager", { on: true })],
];
const rightTools: Tool[][] = [
  [t("arrow", "Select", { on: true })],
  [t("highlight", "Highlight net"), t("localRats", "Local ratsnest")],
  [t("footprint", "Add footprint"), t("route", "Route tracks"), t("via", "Add via"), t("zone", "Add zone"), t("keepout", "Add keepout")],
  [t("line", "Draw line"), t("circle", "Draw circle"), t("arc", "Draw arc"), t("polygon", "Draw polygon"), t("text", "Add text")],
  [t("dimension", "Add dimension"), t("origin", "Set origin")],
];
const layers: [string, string, boolean][] = [
  ["F.Cu", "#840000", false], ["B.Cu", "#008400", true], ["F.Adhes", "#840084", true], ["B.Adhes", "#000084", true],
  ["F.Paste", "#840000", true], ["B.Paste", "#00c2c2", true], ["F.SilkS", "#008484", true], ["B.SilkS", "#840084", true],
  ["F.Mask", "#840084", true], ["B.Mask", "#848400", true], ["Dwgs.User", "#c2c2c2", true], ["Cmts.User", "#000084", true],
  ["Eco1.User", "#008400", true], ["Eco2.User", "#c2c200", true], ["Edge.Cuts", "#c2c200", true], ["Margin", "#c200c2", true],
  ["F.CrtYd", "#c2c2c2", true], ["B.CrtYd", "#848484", true], ["F.Fab", "#848484", false], ["B.Fab", "#000084", true],
];
const messages: [string, string, string, number][] = [
  ["Pads", "36", "#0a500a", 51], ["Vias", "0", "#0a500a", 47], ["Track Segments", "71", "#0a500a", 106],
  ["Nodes", "30", "#1d5a5f", 59], ["Nets", "8", "#961414", 50], ["Unrouted", "6", "#1c148c", 70],
];
const apps: [string, string, ("open" | "active")?][] = [
  ["taskView", "Task view"], ["edge", "Edge", "open"], ["store", "Store"], ["mail", "Mail"],
  ["folder", "File Explorer", "open"], ["schematic", "Eeschema", "open"], ["board", "Pcbnew", "active"], ["recorder", "Recorder", "open"],
];

const ToolGroups = ({ groups, across }: { groups: Tool[][]; across?: boolean }) => (
  <>
    {groups.map((group, i) => (
      <React.Fragment key={i}>
        {i > 0 && <Divider $across={across} $size={i === 5 ? 10 : 8} />}
        {group.map((tool) => (
          <ToolButton key={tool.name} aria-label={tool.label} $on={tool.on} $faded={tool.faded}>
            <Icon name={tool.name} />
          </ToolButton>
        ))}
      </React.Fragment>
    ))}
  </>
);
const Picker = ({ label, value, width, swatch }: { label: string; value: string; width: number; swatch?: boolean }) => (
  <SelectBox $width={width} $white={swatch}>
    <NativeSelect aria-label={label} $swatch={swatch}>
      <option>{value}</option>
    </NativeSelect>
    {swatch && <SelectSwatch />}
    <Chevron />
  </SelectBox>
);

export default function App() {
  return (
    <>
      <GlobalStyle />
      <Screen>
        <TitleBar>
          <Icon name="board" size={15} />
          <Title>Pcbnew — C:\Users\brindha\Desktop\pcb new\dual power supply\dual power supply.kicad_pcb</Title>
          <WindowButton aria-label="Minimize"><Chevron d="M0 5h10" /></WindowButton>
          <WindowButton aria-label="Restore"><Chevron d="M1 3h6v6H1zM3 3V1h6v6H7" /></WindowButton>
          <WindowButton aria-label="Close"><Chevron d="M0 0l10 10M10 0L0 10" /></WindowButton>
        </TitleBar>
        <MenuBar>
          {["File", "Edit", "View", "Setup", "Place", "Route", "Inspect", "Tools", "Preferences", "Help"].map((m) => (
            <MenuItem key={m}>{m}</MenuItem>
          ))}
        </MenuBar>
        <ToolRow $tall>
          <ToolGroups groups={mainTools} />
          <Divider />
          <Picker label="Active layer" value="F.Cu (PgUp)" width={130} swatch />
          <ToolButton aria-label="Layer pair"><Icon name="layerPair" /></ToolButton>
          <Divider />
          <ToolButton aria-label="Scripting console"><Icon name="console" /></ToolButton>
        </ToolRow>
        <ToolRow>
          <Picker label="Track width" value="Track: 0.250 mm (9.84 mils) *" width={168} />
          <Picker label="Via size" value="Via: 0.80 mm (31.5 mils)/ 0.40 mm (15.7 mils) *" width={255} />
          <Divider />
          <ToolButton aria-label="Automatic track width"><Icon name="trackWidth" /></ToolButton>
          <Divider />
          <Picker label="Grid" value="Grid: 1.2700 mm (50.00 mils)" width={172} />
          <Divider />
          <Picker label="Zoom" value="Zoom Auto" width={96} />
        </ToolRow>

        <Work>
          <SideBar><ToolGroups groups={leftTools} across /></SideBar>
          <CanvasArea>
            <CanvasColumn>
              <BoardCanvas />
              <Scroll>
                <ScrollArrow aria-label="Scroll left"><Chevron d="M6 2L3 5l3 3" /></ScrollArrow>
                <ScrollGap $grow={514} />
                <ScrollThumb />
                <ScrollGap $grow={450} />
                <ScrollArrow aria-label="Scroll right"><Chevron d="M4 2l3 3-3 3" /></ScrollArrow>
              </Scroll>
            </CanvasColumn>
            <Scroll $vertical>
              <ScrollArrow aria-label="Scroll up"><Chevron d="M2 6l3-3 3 3" /></ScrollArrow>
              <ScrollGap $grow={236} />
              <ScrollThumb $vertical />
              <ScrollGap $grow={215} />
              <ScrollArrow aria-label="Scroll down"><Chevron d="M2 4l3 3 3-3" /></ScrollArrow>
            </Scroll>
          </CanvasArea>
          <SideBar $right><ToolGroups groups={rightTools} across /></SideBar>
          <Manager>
            <ManagerTitle>Layers Manager</ManagerTitle>
            <Notebook>
              <TabRow role="tablist">
                <Tab role="tab" $on>Layers</Tab>
                <Tab role="tab">Items</Tab>
              </TabRow>
              <LayerList>
                {layers.map(([name, color, shown], i) => (
                  <LayerRow key={name}>
                    <LayerMark $on={i === 0} />
                    <LayerSwatch $color={color} />
                    <LayerLabel>
                      <LayerCheck type="checkbox" defaultChecked={shown} />
                      {name}
                    </LayerLabel>
                  </LayerRow>
                ))}
              </LayerList>
            </Notebook>
          </Manager>
        </Work>

        <MessagePanel>
          {messages.map(([name, value, color, width]) => (
            <Message key={name} $color={color} $width={width}>
              <dt>{name}</dt>
              <dd>{value}</dd>
            </Message>
          ))}
        </MessagePanel>
        <StatusBar>
          <StatusCell />
          <StatusCell>Z 2.95</StatusCell>
          <StatusCell>{"X 129.540000  Y 60.960000"}</StatusCell>
          <StatusCell>{"dx 129.540000  dy 60.960000  dist 143.167"}</StatusCell>
          <StatusCell>mm</StatusCell>
        </StatusBar>

        <TaskBar>
          <StartButton aria-label="Start"><Icon name="windows" size={22} /></StartButton>
          <SearchBox>
            <Icon name="cortana" size={20} />
            <SearchInput aria-label="Search" placeholder="Type here to search" />
            <Icon name="mic" size={16} />
          </SearchBox>
          {apps.map(([icon, label, state]) => (
            <TaskButton key={label} aria-label={label} $state={state}>
              <Icon name={icon} size={icon === "taskView" ? 17 : 22} />
            </TaskButton>
          ))}
          <Tray>
            <TrayButton $width={36} aria-label="People"><Icon name="people" size={15} /></TrayButton>
            <TrayButton $width={28} aria-label="Hidden icons"><Icon name="up" size={16} /></TrayButton>
            <TrayButton $width={20} aria-label="Network"><Icon name="wifi" size={14} /></TrayButton>
            <TrayButton $width={20} aria-label="Volume"><Icon name="sound" size={16} /></TrayButton>
            <TrayButton $width={26} aria-label="Battery"><Icon name="battery" size={15} /></TrayButton>
            <TrayButton $width={32}>{"ENG\nIN"}</TrayButton>
            <TrayButton $width={66}>{"15:33\n24-04-2019"}</TrayButton>
            <TrayButton $width={46} aria-label="Notifications"><Icon name="notice" size={22} /></TrayButton>
          </Tray>
        </TaskBar>
      </Screen>
    </>
  );
}
